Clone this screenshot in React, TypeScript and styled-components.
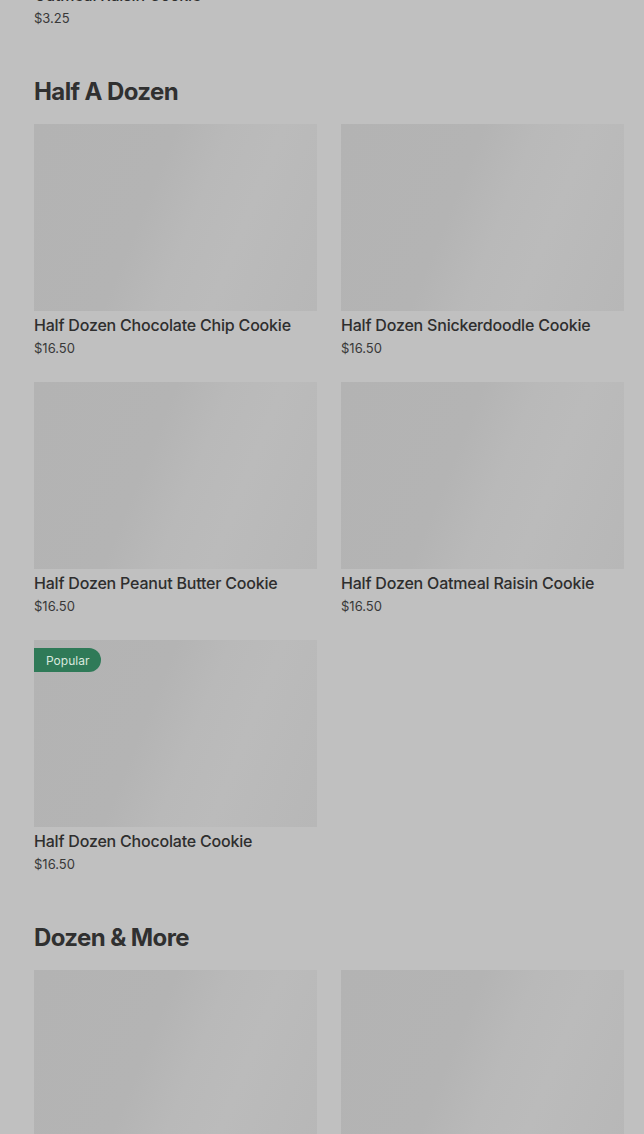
import React from "react";
import styled, { createGlobalStyle } from "styled-components";

const Global = createGlobalStyle`
  html, body { margin: 0; padding: 0; background: #c0c0c0; }
  body { font-family: Inter, "Noto Sans", sans-serif; color: #303030; overflow: hidden; }
`;

const Page = styled.div`
  padding: 0 20px 0 34px;
  margin-top: -206px;
`;

const Section = styled.section`
  display: flex;
  flex-direction: column;
  & + & { margin-top: 47px; }
`;

const Heading = styled.h2`
  margin: 0 0 16px;
  font-size: 24px;
  line-height: 32px;
  font-weight: 700;
  letter-spacing: -0.6px;
  color: #303030;
`;

const Grid = styled.div`
  display: grid;
  grid-template-columns: 283px 283px;
  column-gap: 24px;
  row-gap: 23px;
`;

const Card = styled.div`
  display: flex;
  flex-direction: column;
`;

const Thumb = styled.div`
  position: relative;
  height: 187px;
  background: linear-gradient(
    112deg,
    #b3b3b3 0%,
    #b4b4b4 40%,
    #b9b9b9 55%,
    #bbbbbb 70%,
    #b7b7b7 100%
  );
`;

const Badge = styled.span`
  position: absolute;
  left: 0;
  top: 8px;
  height: 24px;
  padding: 0 12px 0 12px;
  display: flex;
  align-items: center;
  background: #2f7a58;
  color: #d9e8df;
  font-size: 12px;
  border-radius: 0 12px 12px 0;
`;

const Title = styled.div`
  margin-top: 3px;
  font-size: 16px;
  line-height: 22px;
  font-weight: 500;
  letter-spacing: -0.2px;
  color: #2e2e2e;
`;

const Price = styled.div`
  padding-top: 1px;
  font-size: 13px;
  line-height: 22px;
  color: #383838;
`;

type Item = { name: string; price: string; popular?: boolean };

const prev: Item[] = [{ name: "Oatmeal Raisin Cookie", price: "$3.25" }];
const half: Item[] = [
  { name: "Half Dozen Chocolate Chip Cookie", price: "$16.50" },
  { name: "Half Dozen Snickerdoodle Cookie", price: "$16.50" },
  { name: "Half Dozen Peanut Butter Cookie", price: "$16.50" },
  { name: "Half Dozen Oatmeal Raisin Cookie", price: "$16.50" },
  { name: "Half Dozen Chocolate Cookie", price: "$16.50", popular: true },
];
const dozen: Item[] = [
  { name: "Dozen Chocolate Chip Cookie", price: "$30.00" },
  { name: "Dozen Snickerdoodle Cookie", price: "$30.00" },
];

const Items = ({ items }: { items: Item[] }) => (
  <Grid>
    {items.map((it) => (
      <Card key={it.name}>
        <Thumb>{it.popular && <Badge>Popular</Badge>}</Thumb>
        <Title>{it.name}</Title>
        <Price>{it.price}</Price>
      </Card>
    ))}
  </Grid>
);

export default function App() {
  return (
    <>
      <Global />
      <Page>
        <Section>
          <Items items={prev} />
        </Section>
        <Section>
          <Heading>Half A Dozen</Heading>
          <Items items={half} />
        </Section>
        <Section>
          <Heading>Dozen &amp; More</Heading>
          <Items items={dozen} />
        </Section>
      </Page>
    </>
  );
}
